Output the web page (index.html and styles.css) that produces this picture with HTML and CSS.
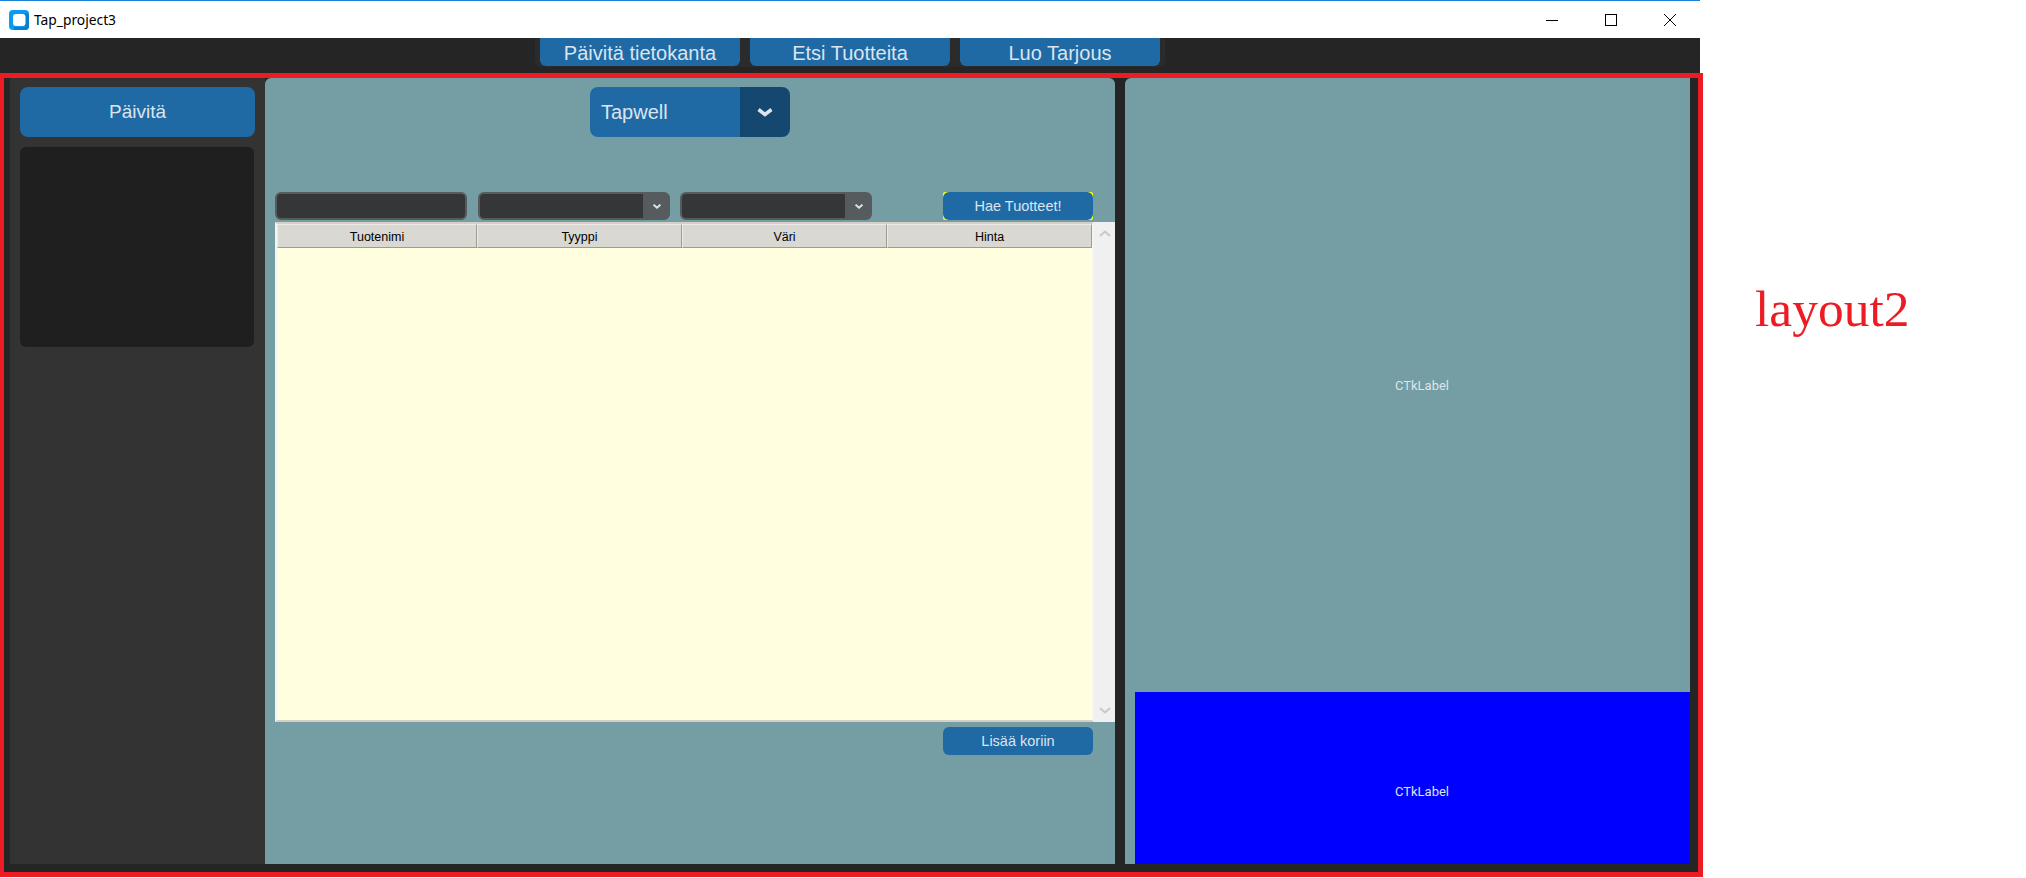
FILE: index.html
```html
<!DOCTYPE html>
<html>
<head>
  <title>Tap_project3</title>
  <link rel="stylesheet" href="styles.css">
</head>
<body>

  <div class="shot">
    <div class="titlebar">
      <svg class="app-icon" width="20" height="20" viewBox="0 0 20 20">
        <rect width="20" height="20" rx="4" fill="#0a9bf6"/>
        <path d="M16 3h1a3 3 0 0 1 3 3v10a4 4 0 0 1-4 4H5v-3h11z" fill="#0a7fd0"/>
        <rect x="4" y="4" width="12.500" height="12" rx="3" fill="#fff"/>
      </svg>
      <span class="app-title">Tap_project3</span>
      <div class="win-controls">
        <svg width="12" height="12" viewBox="0 0 12 12"><path d="M0 6.500h12" stroke="#000" fill="none"/></svg>
        <svg width="12" height="12" viewBox="0 0 12 12"><rect x="0.500" y="0.500" width="11" height="11" stroke="#000" fill="none"/></svg>
        <svg width="12" height="12" viewBox="0 0 12 12"><path d="M0 0l12 12M12 0L0 12" stroke="#000" fill="none"/></svg>
      </div>
    </div>

    <div class="topnav">
      <div class="nav-group">
        <div class="nav-btn">Päivitä tietokanta</div>
        <div class="nav-btn">Etsi Tuotteita</div>
        <div class="nav-btn">Luo Tarjous</div>
      </div>
    </div>

    <div class="layout2">
      <div class="side">
        <div class="side-btn">Päivitä</div>
        <div class="side-box"></div>
      </div>

      <div class="center">
        <div class="brand-select">
          <span class="brand-name">Tapwell</span>
          <span class="brand-arrow">
            <svg width="16" height="9" viewBox="0 0 16 9"><path d="M1.500 1.500L8 6.500l6.500-5" stroke="#dce4ee" stroke-width="3.500" fill="none"/></svg>
          </span>
        </div>

        <div class="filters">
          <div class="entry"></div>
          <div class="combo">
            <span class="combo-arrow">
              <svg width="8" height="5" viewBox="0 0 8 5"><path d="M0.500 0.700L4 3.700 7.500 0.700" stroke="#dce4ee" stroke-width="2" fill="none"/></svg>
            </span>
          </div>
          <div class="combo">
            <span class="combo-arrow">
              <svg width="8" height="5" viewBox="0 0 8 5"><path d="M0.500 0.700L4 3.700 7.500 0.700" stroke="#dce4ee" stroke-width="2" fill="none"/></svg>
            </span>
          </div>
          <div class="search-wrap"><div class="small-btn">Hae Tuotteet!</div></div>
        </div>

        <div class="table-wrap">
          <div class="tree">
            <div class="tree-head">
              <div class="th th-first">Tuotenimi</div>
              <div class="th">Tyyppi</div>
              <div class="th">Väri</div>
              <div class="th">Hinta</div>
            </div>
            <div class="tree-body"></div>
          </div>
          <div class="scrollbar">
            <svg width="12" height="7" viewBox="0 0 12 7"><path d="M1 6l5-4.500L11 6" stroke="#c8c8c8" stroke-width="2" fill="none"/></svg>
            <svg width="12" height="7" viewBox="0 0 12 7"><path d="M1 1l5 4.500L11 1" stroke="#c8c8c8" stroke-width="2" fill="none"/></svg>
          </div>
        </div>

        <div class="add-row"><div class="small-btn">Lisää koriin</div></div>
      </div>

      <div class="right">
        <div class="preview"><span class="ctk-label">CTkLabel</span></div>
        <div class="info"><span class="ctk-label">CTkLabel</span></div>
      </div>
    </div>
  </div>

  <div class="note">layout2</div>

</body>
</html>
```

FILE: styles.css
```css
body { margin: 0; background: #fff; display: flex; font-family: "Liberation Sans", sans-serif; height: 878px; overflow: hidden; }

.shot { width: 1703px; flex: none; }

/* window chrome */
.titlebar { width: 1700px; height: 37px; border-top: 1px solid #1a82d8; display: flex; align-items: center; background: #fff; }
.app-icon { margin-left: 9px; margin-top: 1px; }
.app-title { margin-left: 5px; font-family: "Noto Sans", sans-serif; font-size: 13.800px; color: #000; }
.win-controls { margin-left: auto; display: flex; gap: 47px; padding-right: 24px; }

.topnav { width: 1700px; height: 35px; background: #252525; display: flex; justify-content: center; }
.nav-group { display: flex; gap: 10px; height: 29px; padding: 0 5px; background: #2b2b2b; border-radius: 0 0 6px 6px; }
.nav-btn { width: 200px; height: 28px; padding-top: 2px; box-sizing: border-box; background: #1f6aa5; color: #dce4ee; border-radius: 0 0 6px 6px; font-size: 20px; display: flex; align-items: center; justify-content: center; }

/* red frame */
.layout2 { width: 1703px; height: 804px; box-sizing: border-box; border: 5px solid #ed1c24; border-left-width: 4px; background: #252525; padding: 0 8px 8px 6px; display: flex; }

.side { width: 255px; flex: none; background: #333; padding: 9px 10px; box-sizing: border-box; }
.side-btn { height: 50px; width: 235px; background: #1f6aa5; color: #dce4ee; border-radius: 8px; font-size: 19px; display: flex; align-items: center; justify-content: center; }
.side-box { height: 200px; width: 234px; margin-top: 10px; background: #1e1f1e; border-radius: 6px; }

.center { width: 850px; flex: none; background: #749da4; border-radius: 6px 6px 0 0; display: flex; flex-direction: column; }
.brand-select { width: 200px; height: 50px; margin: 9px auto 0; display: flex; border-radius: 8px; overflow: hidden; }
.brand-name { flex: 1; background: #1f6aa5; color: #dce4ee; font-size: 20px; padding-left: 11px; display: flex; align-items: center; }
.brand-arrow { width: 50px; background: #144870; display: flex; align-items: center; justify-content: center; }

.filters { display: flex; height: 28px; margin-top: 55px; padding-left: 10px; padding-right: 22px; }
.entry { width: 192px; box-sizing: border-box; background: #343638; border: 2px solid #565b5e; border-radius: 6px; }
.combo { width: 192px; margin-left: 11px; box-sizing: border-box; background: #343638; border: 2px solid #565b5e; border-radius: 6px; display: flex; justify-content: flex-end; }
.combo + .combo { margin-left: 10px; }
.combo-arrow { width: 25px; padding-left: 3px; box-sizing: border-box; background: #565b5e; display: flex; align-items: center; justify-content: center; }
.search-wrap { margin-left: auto; background: #ff0; border-radius: 2px; }

.small-btn { width: 150px; height: 28px; background: #1f6aa5; color: #dce4ee; border-radius: 6px; font-size: 14.500px; display: flex; align-items: center; justify-content: center; }

.table-wrap { display: flex; height: 500px; margin-top: 2px; padding-left: 10px; }
.tree { width: 819px; box-sizing: border-box; border: 2px solid #d4d0c8; border-left-color: #f4f4f0; border-right-color: #f4f4f0; display: flex; flex-direction: column; }
.tree-head { display: flex; height: 24px; flex: none; }
.th { width: 205px; padding-top: 2px; box-sizing: border-box; background: #d9d8d3; border: 1px solid #a09b90; border-top-color: #ecebe6; border-left-color: #ecebe6; font-size: 12.500px; color: #000; display: flex; align-items: center; justify-content: center; }
.th-first { width: 200px; }
.tree-body { flex: 1; background: #ffffe0; }
.scrollbar { width: 21px; background: #f0f0f0; display: flex; flex-direction: column; justify-content: space-between; align-items: center; padding: 8px 0; box-sizing: border-box; }

.add-row { display: flex; justify-content: flex-end; padding-right: 22px; margin-top: 5px; }

.right { width: 565px; flex: none; margin-left: 10px; display: flex; flex-direction: column; background: #749da4; border-radius: 6px 0 0 0; }
.preview { height: 614px; padding-left: 29px; display: flex; align-items: center; justify-content: center; box-sizing: border-box; }
.info { flex: 1; margin-left: 10px; padding-left: 19px; padding-top: 26px; background: #00f; display: flex; align-items: center; justify-content: center; box-sizing: border-box; }
.ctk-label { font-family: Roboto, sans-serif; font-size: 13px; color: #dce4ee; }

/* annotation beside the screenshot */
.note { margin-left: 52px; margin-top: 281px; font-family: "Liberation Serif", serif; font-size: 51.500px; line-height: 56px; color: #ed1c24; }
```
